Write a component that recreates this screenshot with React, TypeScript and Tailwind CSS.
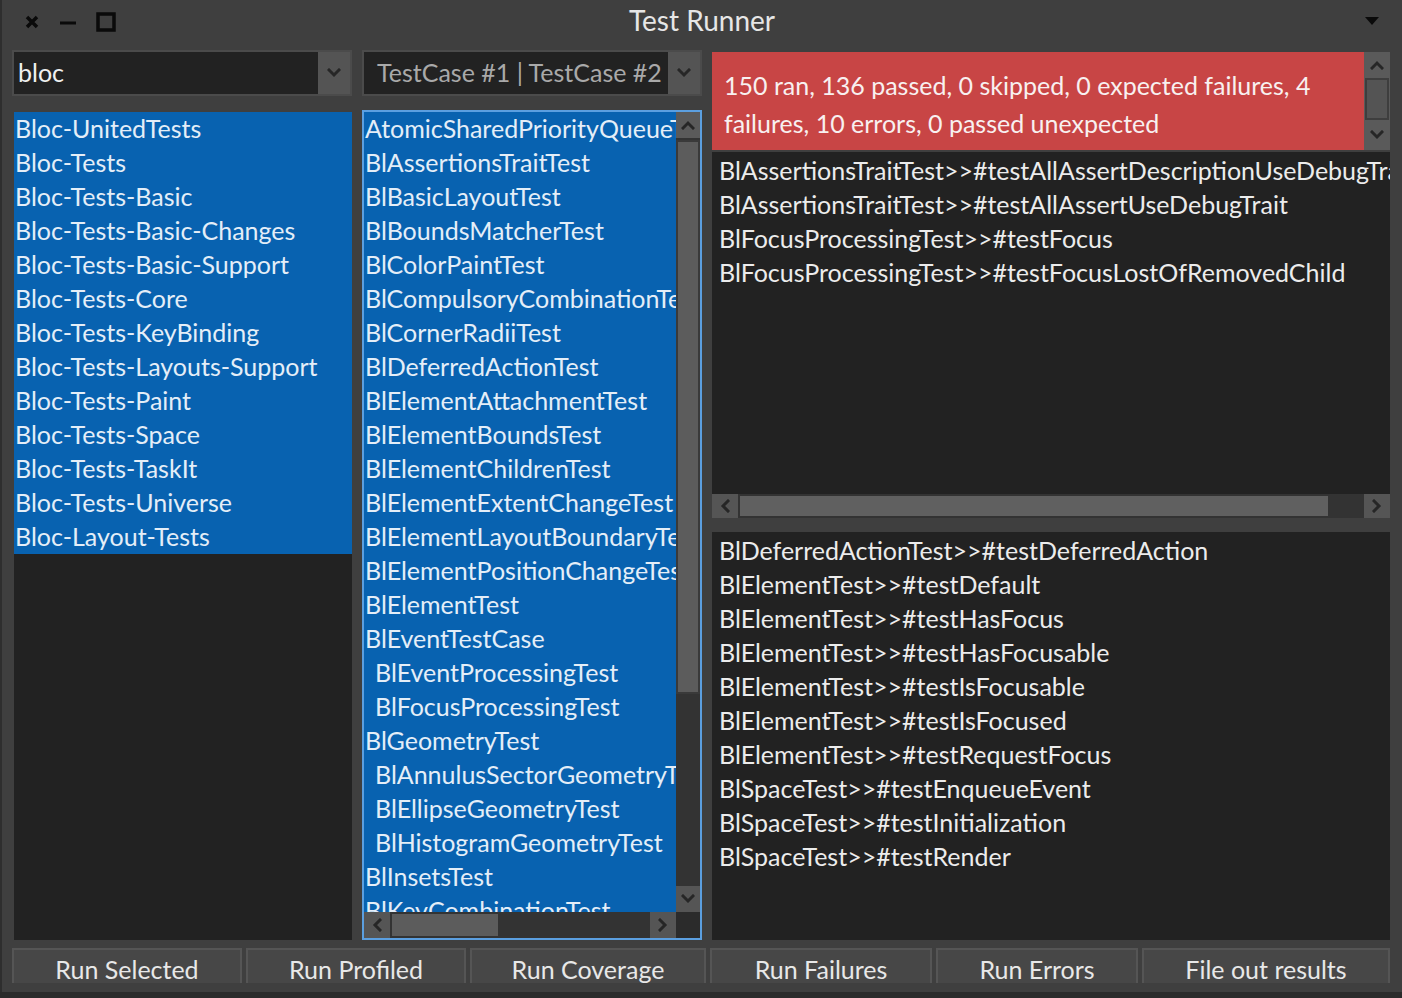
import React from 'react';

const FONT = { fontFamily: 'Lato, "Open Sans", sans-serif' };

function Chevron({ dir = 'down', className = '' }: { dir?: 'down' | 'up' | 'left' | 'right'; className?: string }) {
  const rot = { down: 0, up: 180, left: 90, right: -90 }[dir];
  return (
    <svg width="14" height="10" viewBox="0 0 14 10" className={className} style={{ transform: `rotate(${rot}deg)` }}>
      <path d="M2 2 L7 7 L12 2" stroke="#262626" strokeWidth="3" fill="none" strokeLinecap="square" />
    </svg>
  );
}

const packages = [
  'Bloc-UnitedTests',
  'Bloc-Tests',
  'Bloc-Tests-Basic',
  'Bloc-Tests-Basic-Changes',
  'Bloc-Tests-Basic-Support',
  'Bloc-Tests-Core',
  'Bloc-Tests-KeyBinding',
  'Bloc-Tests-Layouts-Support',
  'Bloc-Tests-Paint',
  'Bloc-Tests-Space',
  'Bloc-Tests-TaskIt',
  'Bloc-Tests-Universe',
  'Bloc-Layout-Tests',
];

const classes: [string, boolean][] = [
  ['AtomicSharedPriorityQueueTest', false],
  ['BlAssertionsTraitTest', false],
  ['BlBasicLayoutTest', false],
  ['BlBoundsMatcherTest', false],
  ['BlColorPaintTest', false],
  ['BlCompulsoryCombinationTest', false],
  ['BlCornerRadiiTest', false],
  ['BlDeferredActionTest', false],
  ['BlElementAttachmentTest', false],
  ['BlElementBoundsTest', false],
  ['BlElementChildrenTest', false],
  ['BlElementExtentChangeTest', false],
  ['BlElementLayoutBoundaryTest', false],
  ['BlElementPositionChangeTest', false],
  ['BlElementTest', false],
  ['BlEventTestCase', false],
  ['BlEventProcessingTest', true],
  ['BlFocusProcessingTest', true],
  ['BlGeometryTest', false],
  ['BlAnnulusSectorGeometryTest', true],
  ['BlEllipseGeometryTest', true],
  ['BlHistogramGeometryTest', true],
  ['BlInsetsTest', false],
  ['BlKeyCombinationTest', false],
];

const failures = [
  'BlAssertionsTraitTest>>#testAllAssertDescriptionUseDebugTrait',
  'BlAssertionsTraitTest>>#testAllAssertUseDebugTrait',
  'BlFocusProcessingTest>>#testFocus',
  'BlFocusProcessingTest>>#testFocusLostOfRemovedChild',
];

const errors = [
  'BlDeferredActionTest>>#testDeferredAction',
  'BlElementTest>>#testDefault',
  'BlElementTest>>#testHasFocus',
  'BlElementTest>>#testHasFocusable',
  'BlElementTest>>#testIsFocusable',
  'BlElementTest>>#testIsFocused',
  'BlElementTest>>#testRequestFocus',
  'BlSpaceTest>>#testEnqueueEvent',
  'BlSpaceTest>>#testInitialization',
  'BlSpaceTest>>#testRender',
];

const buttons: [string, string][] = [
  ['Run Selected', 'w-[230px]'],
  ['Run Profiled', 'w-[220px]'],
  ['Run Coverage', 'w-[236px]'],
  ['Run Failures', 'w-[222px]'],
  ['Run Errors', 'w-[202px]'],
  ['File out results', 'flex-1'],
];

function Dropdown({ children }: { children: React.ReactNode }) {
  return (
    <div className="h-[46px] flex border-2 border-[#4b4b4b] bg-[#222222]">
      <div className="flex-1 min-w-0 flex items-center overflow-hidden whitespace-nowrap">{children}</div>
      <div className="w-[32px] shrink-0 bg-[#545454] flex items-center justify-center">
        <Chevron />
      </div>
    </div>
  );
}

export default function App() {
  return (
    <div className="w-[1402px] h-[998px] bg-[#2b2b2b] overflow-hidden text-[#ececec]" style={FONT}>
      <div className="h-[992px] bg-[#3f3f3f] border-l-2 border-[#2e2e2e] flex flex-col">
        {/* Title bar */}
        <div className="h-[42px] relative flex items-center justify-center shrink-0">
          <div className="absolute left-[21px] top-[12px] flex items-center gap-[18px]">
            <svg width="18" height="18" viewBox="0 0 18 18">
              <path d="M4 4 L14 14 M14 4 L4 14" stroke="#0a0a0a" strokeWidth="3.5" />
            </svg>
            <svg width="18" height="18" viewBox="0 0 18 18">
              <path d="M1 10 H17" stroke="#0a0a0a" strokeWidth="3" />
            </svg>
            <svg width="22" height="20" viewBox="0 0 22 20">
              <rect x="3" y="2" width="16" height="16" stroke="#0a0a0a" strokeWidth="3.5" fill="none" />
            </svg>
          </div>
          <span className="text-[28px] text-[#e6e6e6] leading-none -mt-[2px]">Test Runner</span>
          <svg className="absolute right-[22px] top-[16px]" width="16" height="10" viewBox="0 0 16 10">
            <path d="M1 1 H15 L8 9 Z" fill="#0a0a0a" />
          </svg>
        </div>

        {/* Body */}
        <div className="flex pl-[10px] pr-[12px] pt-[8px] h-[898px] shrink-0 text-[25px]">
          {/* Packages */}
          <div className="w-[340px] shrink-0 flex flex-col">
            <Dropdown>
              <span className="pl-[4px] text-[#f0f0f0]">bloc</span>
            </Dropdown>
            <div className="mt-[16px] ml-[2px] flex-1 bg-[#222222] overflow-hidden">
              {packages.map((p) => (
                <div key={p} className="h-[34px] bg-[#0862b0] flex items-center px-[1px] text-[#e4eef8] whitespace-nowrap">
                  {p}
                </div>
              ))}
            </div>
          </div>

          {/* Classes */}
          <div className="w-[340px] shrink-0 ml-[10px] flex flex-col">
            <Dropdown>
              <span className="pl-[13px] text-[#a9a9a9]">TestCase #1 | TestCase #2</span>
            </Dropdown>
            <div className="mt-[14px] h-[830px] border-2 border-[#5b9fe0] bg-[#0862b0] flex flex-col">
              <div className="flex flex-1 min-h-0">
                <div className="flex-1 min-w-0 overflow-hidden">
                  {classes.map(([c, indent]) => (
                    <div
                      key={c}
                      className={`h-[34px] flex items-center text-[#e4eef8] whitespace-nowrap ${indent ? 'pl-[11px]' : 'pl-[1px]'}`}
                    >
                      {c}
                    </div>
                  ))}
                </div>
                <div className="w-[24px] shrink-0 flex flex-col bg-[#333333]">
                  <div className="h-[26px] bg-[#5a5a5a] flex items-center justify-center">
                    <Chevron dir="up" />
                  </div>
                  <div className="h-[554px] mt-[2px] bg-[#5c5c5c] border-2 border-[#3a3a3a]" />
                  <div className="flex-1" />
                  <div className="h-[26px] bg-[#555555] flex items-center justify-center">
                    <Chevron dir="down" />
                  </div>
                </div>
              </div>
              <div className="h-[26px] shrink-0 flex bg-[#333333]">
                <div className="w-[26px] bg-[#555555] flex items-center justify-center">
                  <Chevron dir="left" />
                </div>
                <div className="w-[106px] my-[2px] ml-[2px] bg-[#5c5c5c]" />
                <div className="flex-1" />
                <div className="w-[26px] bg-[#555555] flex items-center justify-center">
                  <Chevron dir="right" />
                </div>
                <div className="w-[24px] bg-[#2b2b2b]" />
              </div>
            </div>
          </div>

          {/* Results */}
          <div className="flex-1 min-w-0 ml-[10px] flex flex-col pt-[2px]">
            <div className="h-[98px] shrink-0 flex bg-[#c84545]">
              <div className="flex-1 min-w-0 px-[12px] pt-[14px] leading-[38px] text-[#f8f0f0]">
                150 ran, 136 passed, 0 skipped, 0 expected failures, 4 failures, 10 errors, 0 passed unexpected
              </div>
              <div className="w-[26px] shrink-0 bg-[#5a5a5a] flex flex-col items-center">
                <div className="h-[26px] flex items-center justify-center">
                  <Chevron dir="up" />
                </div>
                <div className="w-[24px] h-[42px] bg-[#545454] border-2 border-[#3e3e3e]" />
                <div className="flex-1 flex items-center justify-center">
                  <Chevron dir="down" />
                </div>
              </div>
            </div>

            <div className="mt-[2px] h-[366px] shrink-0 bg-[#222222] flex flex-col">
              <div className="flex-1 overflow-hidden pt-[2px]">
                {failures.map((f) => (
                  <div key={f} className="h-[34px] flex items-center px-[7px] text-[#ececec] whitespace-nowrap">
                    {f}
                  </div>
                ))}
              </div>
              <div className="h-[24px] shrink-0 flex bg-[#333333]">
                <div className="w-[26px] bg-[#555555] flex items-center justify-center">
                  <Chevron dir="left" />
                </div>
                <div className="w-[588px] my-[2px] ml-[2px] bg-[#606060]" />
                <div className="flex-1" />
                <div className="w-[26px] bg-[#555555] flex items-center justify-center">
                  <Chevron dir="right" />
                </div>
              </div>
            </div>

            <div className="mt-[14px] flex-1 bg-[#222222] overflow-hidden pt-[2px]">
              {errors.map((e) => (
                <div key={e} className="h-[34px] flex items-center px-[7px] text-[#ececec] whitespace-nowrap">
                  {e}
                </div>
              ))}
            </div>
          </div>
        </div>

        {/* Buttons */}
        <div className="flex gap-[4px] pl-[10px] pr-[12px] pt-[8px]">
          {buttons.map(([b, w]) => (
            <div
              key={b}
              className={`${w} h-[35px] bg-[#474747] border-t-2 border-l-2 border-r-2 border-[#555555] flex items-end justify-center pb-[1px] text-[25px] text-[#e8e8e8] leading-none`}
            >
              {b}
            </div>
          ))}
        </div>
      </div>
    </div>
  );
}
